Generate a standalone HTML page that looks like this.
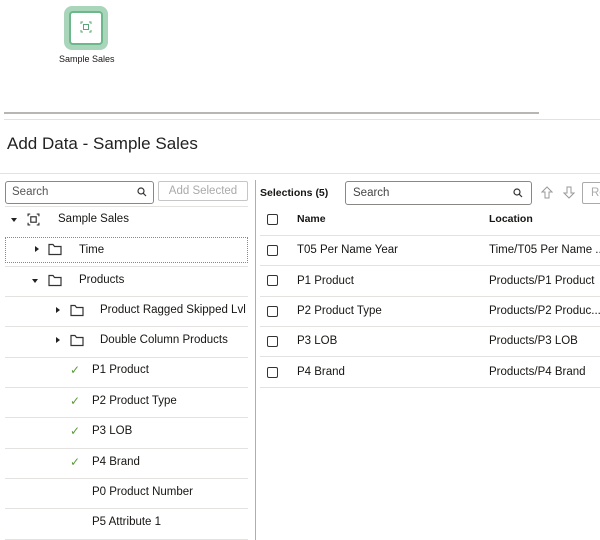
<!DOCTYPE html>
<html><head><style>
*{margin:0;padding:0;box-sizing:border-box}
body{width:600px;height:540px;overflow:hidden;background:#fff;font-family:"Liberation Sans",sans-serif;color:#161513;position:relative;font-size:11.5px}
.a{position:absolute;white-space:nowrap}
.hl{position:absolute;height:1px;background:#e4e2e0}
.cb{position:absolute;width:11px;height:11px;border:1.3px solid #333;border-radius:2px}
.chk{position:absolute;color:#5a9a3a;font-size:12px}
.tri{position:absolute;width:0;height:0}
</style></head><body>
<div class="a" style="left:64px;top:6px;width:44px;height:44px;background:#a9d6ba;border-radius:8px"></div>
<div class="a" style="left:69px;top:11px;width:34px;height:34px;background:#fff;border:2px solid #6cb88a;border-radius:4px"></div>
<svg class="a" style="left:80px;top:21px" width="12" height="12" viewBox="0 0 12 12" fill="none" stroke="#5aa877" stroke-width="1"><path d="M1 3V1h2M9 1h2v2M11 9v2H9M3 11H1V9"/><rect x="3.5" y="3.5" width="5" height="5"/></svg>
<div class="a" style="left:59px;top:54px;font-size:9px">Sample Sales</div>
<div class="a" style="left:4px;top:112px;width:535px;height:2px;background:#b8b6b4"></div>
<div class="hl" style="left:4px;top:119px;width:596px"></div>
<div class="a" style="left:7px;top:134px;font-size:17px;color:#222">Add Data - Sample Sales</div>
<div class="hl" style="left:0;top:173px;width:600px"></div>
<div class="a" style="left:5px;top:181px;width:149px;height:23px;border:1px solid #8a8886;border-radius:3px"></div>
<div class="a" style="left:12px;top:186px;color:#555">Search</div>
<svg class="a" style="left:137px;top:187px" width="10" height="10" viewBox="0 0 10 10" fill="none" stroke="#333" stroke-width="1.2"><circle cx="4" cy="4" r="3"/><path d="M6.3 6.3L9 9"/></svg>
<div class="a" style="left:158px;top:181px;width:90px;height:20px;border:1px solid #c8c6c4;border-radius:2px;color:#aaa;text-align:center;line-height:18px">Add Selected</div>
<div class="a" style="left:255px;top:180px;width:1px;height:360px;background:#b0aeac"></div>
<div class="hl" style="left:5px;top:206px;width:243px"></div>
<div class="tri" style="left:11px;top:218px;border-left:3.5px solid transparent;border-right:3.5px solid transparent;border-top:4px solid #222"></div>
<svg class="a" style="left:27px;top:213px" width="13" height="13" viewBox="0 0 12 12" fill="none" stroke="#333" stroke-width="1.1"><path d="M1 3V1h2M9 1h2v2M11 9v2H9M3 11H1V9"/><rect x="3.5" y="3.5" width="5" height="5"/></svg>
<div class="a" style="left:58px;top:213px">Sample Sales</div>
<div class="a" style="left:5px;top:237px;width:243px;height:26px;border:1px dotted #888"></div>
<div class="tri" style="left:35px;top:246px;border-top:3.5px solid transparent;border-bottom:3.5px solid transparent;border-left:4px solid #222"></div>
<svg class="a" style="left:48px;top:243px" width="14" height="13" viewBox="0 0 14 13" fill="none" stroke="#333" stroke-width="1.2"><path d="M1 1.5h4l1.5 2H13v8H1z"/></svg>
<div class="a" style="left:79px;top:244px">Time</div>
<div class="hl" style="left:5px;top:266px;width:243px"></div>
<div class="tri" style="left:32px;top:279px;border-left:3.5px solid transparent;border-right:3.5px solid transparent;border-top:4px solid #222"></div>
<svg class="a" style="left:48px;top:274px" width="14" height="13" viewBox="0 0 14 13" fill="none" stroke="#333" stroke-width="1.2"><path d="M1 1.5h4l1.5 2H13v8H1z"/></svg>
<div class="a" style="left:79px;top:274px">Products</div>
<div class="hl" style="left:5px;top:296px;width:243px"></div>
<div class="tri" style="left:56px;top:307px;border-top:3.5px solid transparent;border-bottom:3.5px solid transparent;border-left:4px solid #222"></div>
<svg class="a" style="left:70px;top:304px" width="14" height="13" viewBox="0 0 14 13" fill="none" stroke="#333" stroke-width="1.2"><path d="M1 1.5h4l1.5 2H13v8H1z"/></svg>
<div class="a" style="left:100px;top:304px">Product Ragged Skipped Lvl</div>
<div class="hl" style="left:5px;top:326px;width:243px"></div>
<div class="tri" style="left:56px;top:337px;border-top:3.5px solid transparent;border-bottom:3.5px solid transparent;border-left:4px solid #222"></div>
<svg class="a" style="left:70px;top:334px" width="14" height="13" viewBox="0 0 14 13" fill="none" stroke="#333" stroke-width="1.2"><path d="M1 1.5h4l1.5 2H13v8H1z"/></svg>
<div class="a" style="left:100px;top:334px">Double Column Products</div>
<div class="hl" style="left:5px;top:357px;width:243px"></div>
<div class="chk" style="left:70px;top:363px">✓</div><div class="a" style="left:92px;top:364px">P1 Product</div>
<div class="hl" style="left:5px;top:387px;width:243px"></div>
<div class="chk" style="left:70px;top:394px">✓</div><div class="a" style="left:92px;top:395px">P2 Product Type</div>
<div class="hl" style="left:5px;top:417px;width:243px"></div>
<div class="chk" style="left:70px;top:424px">✓</div><div class="a" style="left:92px;top:425px">P3 LOB</div>
<div class="hl" style="left:5px;top:448px;width:243px"></div>
<div class="chk" style="left:70px;top:455px">✓</div><div class="a" style="left:92px;top:456px">P4 Brand</div>
<div class="hl" style="left:5px;top:478px;width:243px"></div>
<div class="a" style="left:92px;top:486px">P0 Product Number</div>
<div class="hl" style="left:5px;top:508px;width:243px"></div>
<div class="a" style="left:92px;top:516px">P5 Attribute 1</div>
<div class="hl" style="left:5px;top:539px;width:243px"></div>
<div class="a" style="left:260px;top:187px;font-weight:bold;font-size:10.5px">Selections (5)</div>
<div class="a" style="left:345px;top:181px;width:187px;height:24px;border:1px solid #8a8886;border-radius:3px"></div>
<div class="a" style="left:353px;top:187px;color:#444">Search</div>
<svg class="a" style="left:513px;top:188px" width="10" height="10" viewBox="0 0 10 10" fill="none" stroke="#333" stroke-width="1.2"><circle cx="4" cy="4" r="3"/><path d="M6.3 6.3L9 9"/></svg>
<svg class="a" style="left:541px;top:186px" width="12" height="13" viewBox="0 0 12 13" fill="none" stroke="#999" stroke-width="1"><path d="M6 1L1 6h3v6h4V6h3z"/></svg>
<svg class="a" style="left:563px;top:186px" width="12" height="13" viewBox="0 0 12 13" fill="none" stroke="#999" stroke-width="1"><path d="M6 12L1 7h3V1h4v6h3z"/></svg>
<div class="a" style="left:582px;top:182px;width:30px;height:22px;border:1px solid #aaa;border-radius:2px;color:#aaa;padding:4px 0 0 8px">Re</div>
<div class="cb" style="left:267px;top:214px"></div>
<div class="a" style="left:297px;top:213px;font-weight:bold;font-size:10.5px">Name</div>
<div class="a" style="left:489px;top:213px;font-weight:bold;font-size:10.5px">Location</div>
<div class="hl" style="left:260px;top:235px;width:340px"></div>
<div class="cb" style="left:267px;top:245px"></div><div class="a" style="left:297px;top:244px">T05 Per Name Year</div><div class="a" style="left:489px;top:244px">Time/T05 Per Name ...</div>
<div class="hl" style="left:260px;top:265px;width:340px"></div>
<div class="cb" style="left:267px;top:275px"></div><div class="a" style="left:297px;top:275px">P1 Product</div><div class="a" style="left:489px;top:275px">Products/P1 Product</div>
<div class="hl" style="left:260px;top:296px;width:340px"></div>
<div class="cb" style="left:267px;top:306px"></div><div class="a" style="left:297px;top:305px">P2 Product Type</div><div class="a" style="left:489px;top:305px">Products/P2 Produc...</div>
<div class="hl" style="left:260px;top:326px;width:340px"></div>
<div class="cb" style="left:267px;top:336px"></div><div class="a" style="left:297px;top:335px">P3 LOB</div><div class="a" style="left:489px;top:335px">Products/P3 LOB</div>
<div class="hl" style="left:260px;top:356px;width:340px"></div>
<div class="cb" style="left:267px;top:367px"></div><div class="a" style="left:297px;top:366px">P4 Brand</div><div class="a" style="left:489px;top:366px">Products/P4 Brand</div>
<div class="hl" style="left:260px;top:387px;width:340px"></div>
</body></html>
